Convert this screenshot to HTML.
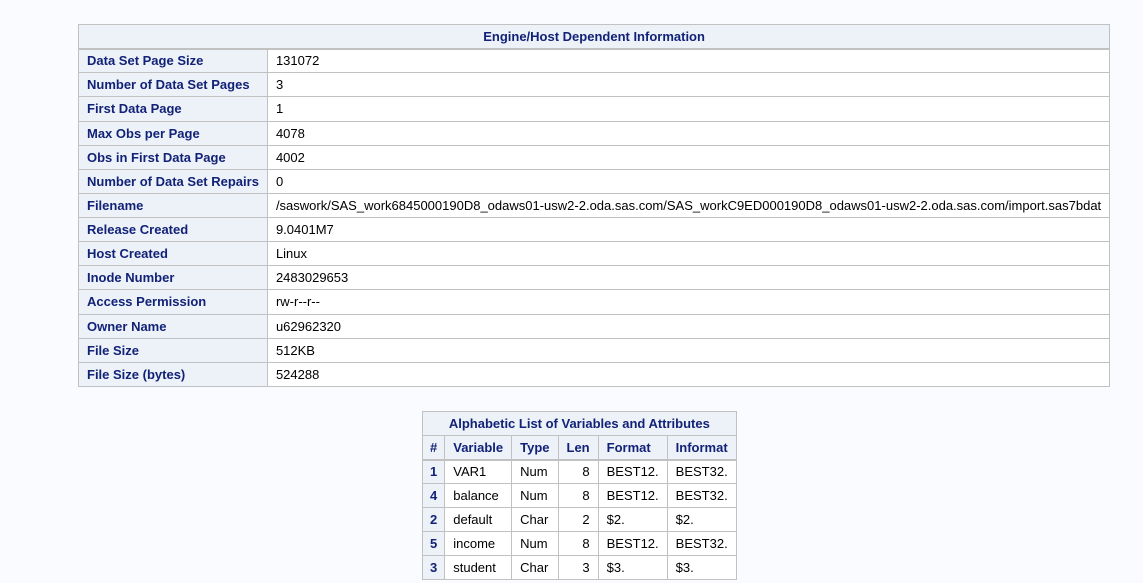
<!DOCTYPE html>
<html><head><style>
body{margin:0;background:#fafbfe;font-family:"Liberation Sans",Arial,sans-serif;font-size:13px;}
table{border-collapse:collapse;position:absolute;background:#fff;}
td,th{border:1px solid #c1c1c1;padding:0 8px;height:23px;box-sizing:border-box;white-space:nowrap;}
th{background:#edf2f9;color:#112277;font-weight:bold;text-align:left;}
th.c{text-align:center;}
td{color:#000;}
.r{text-align:right;}
#t1{left:78px;top:24px;width:993px;}
#t1 tr{height:24.14px;}
#t2{left:422px;top:411px;width:304px;}
#t2 tr{height:24px;}
.hb th{border-bottom:2px solid #c1c1c1;}
</style></head><body>
<table id="t1">
<tr class="hb"><th class="c" colspan="2" style="height:24px">Engine/Host Dependent Information</th></tr>
<tr><th style="width:182px">Data Set Page Size</th><td>131072</td></tr>
<tr><th>Number of Data Set Pages</th><td>3</td></tr>
<tr><th>First Data Page</th><td>1</td></tr>
<tr><th>Max Obs per Page</th><td>4078</td></tr>
<tr><th>Obs in First Data Page</th><td>4002</td></tr>
<tr><th>Number of Data Set Repairs</th><td>0</td></tr>
<tr><th>Filename</th><td>/saswork/SAS_work6845000190D8_odaws01-usw2-2.oda.sas.com/SAS_workC9ED000190D8_odaws01-usw2-2.oda.sas.com/import.sas7bdat</td></tr>
<tr><th>Release Created</th><td>9.0401M7</td></tr>
<tr><th>Host Created</th><td>Linux</td></tr>
<tr><th>Inode Number</th><td>2483029653</td></tr>
<tr><th>Access Permission</th><td>rw-r--r--</td></tr>
<tr><th>Owner Name</th><td>u62962320</td></tr>
<tr><th>File Size</th><td>512KB</td></tr>
<tr><th>File Size (bytes)</th><td>524288</td></tr>
</table>
<table id="t2">
<tr><th class="c" colspan="6">Alphabetic List of Variables and Attributes</th></tr>
<tr class="hb"><th style="width:24px;padding:0 7px">#</th><th style="width:64px">Variable</th><th style="width:44px">Type</th><th style="width:39px">Len</th><th style="width:66px">Format</th><th>Informat</th></tr>
<tr><th style="padding:0 7px">1</th><td>VAR1</td><td>Num</td><td class="r">8</td><td>BEST12.</td><td>BEST32.</td></tr>
<tr><th style="padding:0 7px">4</th><td>balance</td><td>Num</td><td class="r">8</td><td>BEST12.</td><td>BEST32.</td></tr>
<tr><th style="padding:0 7px">2</th><td>default</td><td>Char</td><td class="r">2</td><td>$2.</td><td>$2.</td></tr>
<tr><th style="padding:0 7px">5</th><td>income</td><td>Num</td><td class="r">8</td><td>BEST12.</td><td>BEST32.</td></tr>
<tr><th style="padding:0 7px">3</th><td>student</td><td>Char</td><td class="r">3</td><td>$3.</td><td>$3.</td></tr>
</table>
</body></html>
